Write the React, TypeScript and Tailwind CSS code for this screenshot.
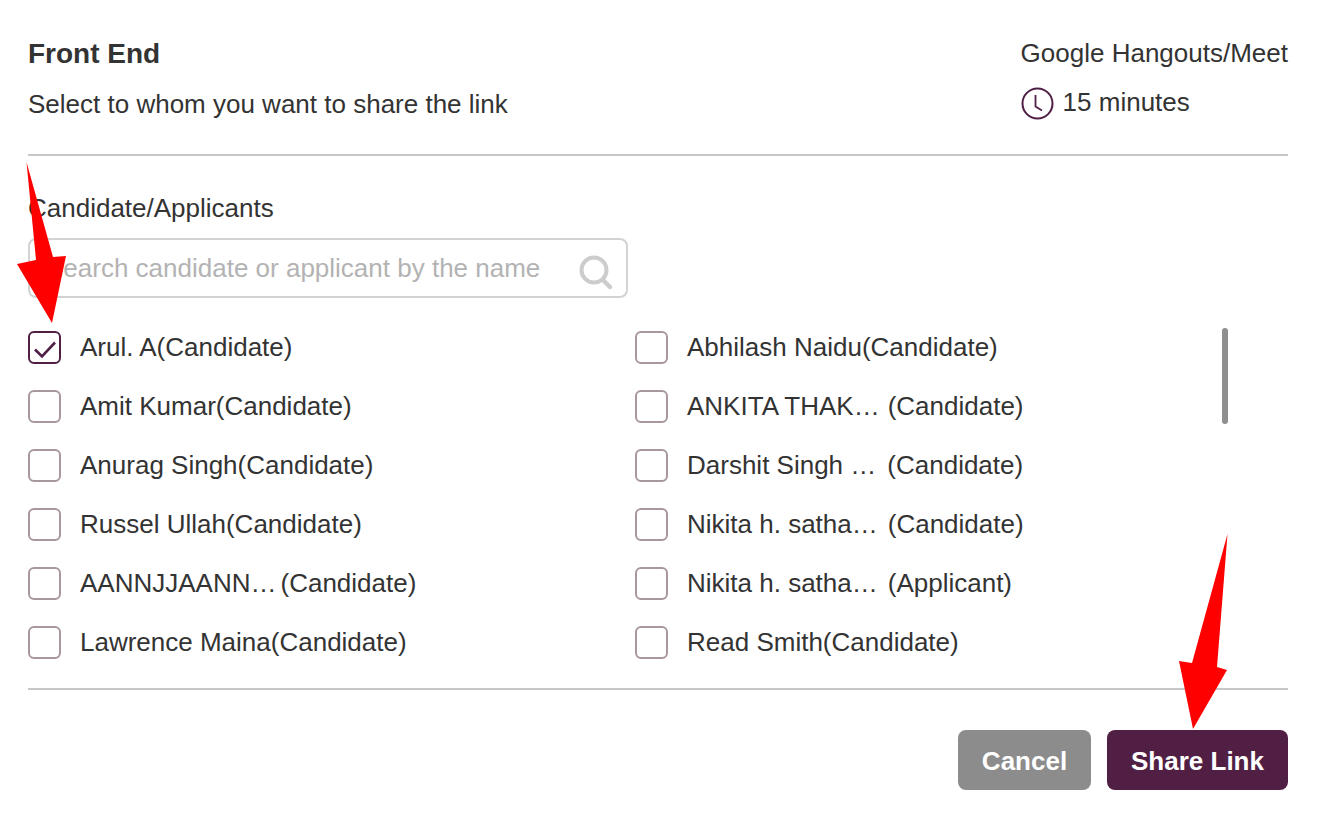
interface Person {
  name: string;
  role?: string;
  checked?: boolean;
  gap?: string;
}

const left: Person[] = [
  { name: 'Arul. A(Candidate)', checked: true },
  { name: 'Amit Kumar(Candidate)' },
  { name: 'Anurag Singh(Candidate)' },
  { name: 'Russel Ullah(Candidate)' },
  { name: 'AANNJJAANN…', role: '(Candidate)', gap: 'ml-[4px]' },
  { name: 'Lawrence Maina(Candidate)' },
];

const right: Person[] = [
  { name: 'Abhilash Naidu(Candidate)' },
  { name: 'ANKITA THAK…', role: '(Candidate)', gap: 'ml-[8px]' },
  { name: 'Darshit Singh …', role: '(Candidate)', gap: 'ml-[11px]' },
  { name: 'Nikita h. satha…', role: '(Candidate)', gap: 'ml-[10px]' },
  { name: 'Nikita h. satha…', role: '(Applicant)', gap: 'ml-[10px]' },
  { name: 'Read Smith(Candidate)' },
];

function Row({ person }: { person: Person }) {
  return (
    <div className="flex h-[59px] items-center">
      <span
        className={`flex h-[33px] w-[33px] items-center justify-center rounded-[6px] border-2 ${
          person.checked ? 'border-[#4f1f45]' : 'border-[#a8979f]'
        }`}
      >
        {person.checked && (
          <svg width="25" height="25" viewBox="0 0 25 25" fill="none">
            <path d="M3 14.5 L10 21.5 L23 7.5" stroke="#4f1f45" strokeWidth="2.6" />
          </svg>
        )}
      </span>
      <span className="ml-[19px] whitespace-nowrap">{person.name}</span>
      {person.role && <span className={`whitespace-nowrap ${person.gap}`}>{person.role}</span>}
    </div>
  );
}

export default function App() {
  return (
    <div className="relative h-[820px] w-[1318px] overflow-hidden bg-white pl-[28px] pr-[30px] font-['Liberation_Sans',Arial,sans-serif] text-[26px] text-[#333333]">
      <div className="flex h-[156px] justify-between border-b-2 border-[#c8c8c8] pt-[36px]">
        <div>
          <h1 className="text-[28px] leading-[36px] font-bold">Front End</h1>
          <p className="mt-[15px] leading-[34px]">Select to whom you want to share the link</p>
        </div>
        <div>
          <p className="leading-[34px]">Google Hangouts/Meet</p>
          <div className="mt-[14px] flex h-[36px] items-center gap-[9px]">
            <svg width="33" height="33" viewBox="0 0 33 33" fill="none" stroke="#4f1f45" strokeWidth="2" className="translate-y-[1px]">
              <circle cx="16.5" cy="16.5" r="15" />
              <path d="M14.5 8 V19.5 L21 23.5" strokeWidth="1.8" />
            </svg>
            <span>15 minutes</span>
          </div>
        </div>
      </div>

      <p className="mt-[35px] leading-[34px]">Candidate/Applicants</p>
      <div className="mt-[13px] flex h-[60px] w-[600px] items-center justify-between rounded-[8px] border-2 border-[#d3d3d3] pr-[10px] pl-[16px]">
        <span className="text-[#b3b3b3]">Search candidate or applicant by the name</span>
        <svg width="40" height="40" viewBox="0 0 40 40" fill="none" stroke="#cccccc" strokeWidth="4" className="overflow-visible">
          <circle cx="18" cy="22" r="12.5" />
          <path d="M27 32 L34 39" strokeWidth="4.5" strokeLinecap="round" />
        </svg>
      </div>

      <div className="relative mt-[20px] grid h-[354px] grid-cols-[607px_1fr]">
        <div>
          {left.map((p) => (
            <Row key={p.name} person={p} />
          ))}
        </div>
        <div>
          {right.map((p) => (
            <Row key={p.name + p.role} person={p} />
          ))}
        </div>
        <div className="absolute top-[10px] left-[1194px] h-[96px] w-[6px] rounded-full bg-[#8f8f8f]" />
      </div>

      <div className="mt-[16px] flex h-[103px] items-end justify-end gap-[16px] border-t-2 border-[#c8c8c8] pb-[1px]">
        <button className="h-[60px] w-[133px] rounded-[8px] bg-[#8c8c8c] pt-[2px] font-bold text-white">Cancel</button>
        <button className="h-[60px] w-[181px] rounded-[8px] bg-[#521f44] pt-[2px] font-bold text-white">Share Link</button>
      </div>

      <svg className="pointer-events-none absolute top-0 left-0" width="1318" height="820" viewBox="0 0 1318 820" fill="#ff0000">
        <polygon points="26.5,162 53,257 66,256 52,323 17,264 36,260" />
        <polygon points="1227.5,534 1217,667 1227,670 1193,729 1179,661 1192,663" />
      </svg>
    </div>
  );
}
